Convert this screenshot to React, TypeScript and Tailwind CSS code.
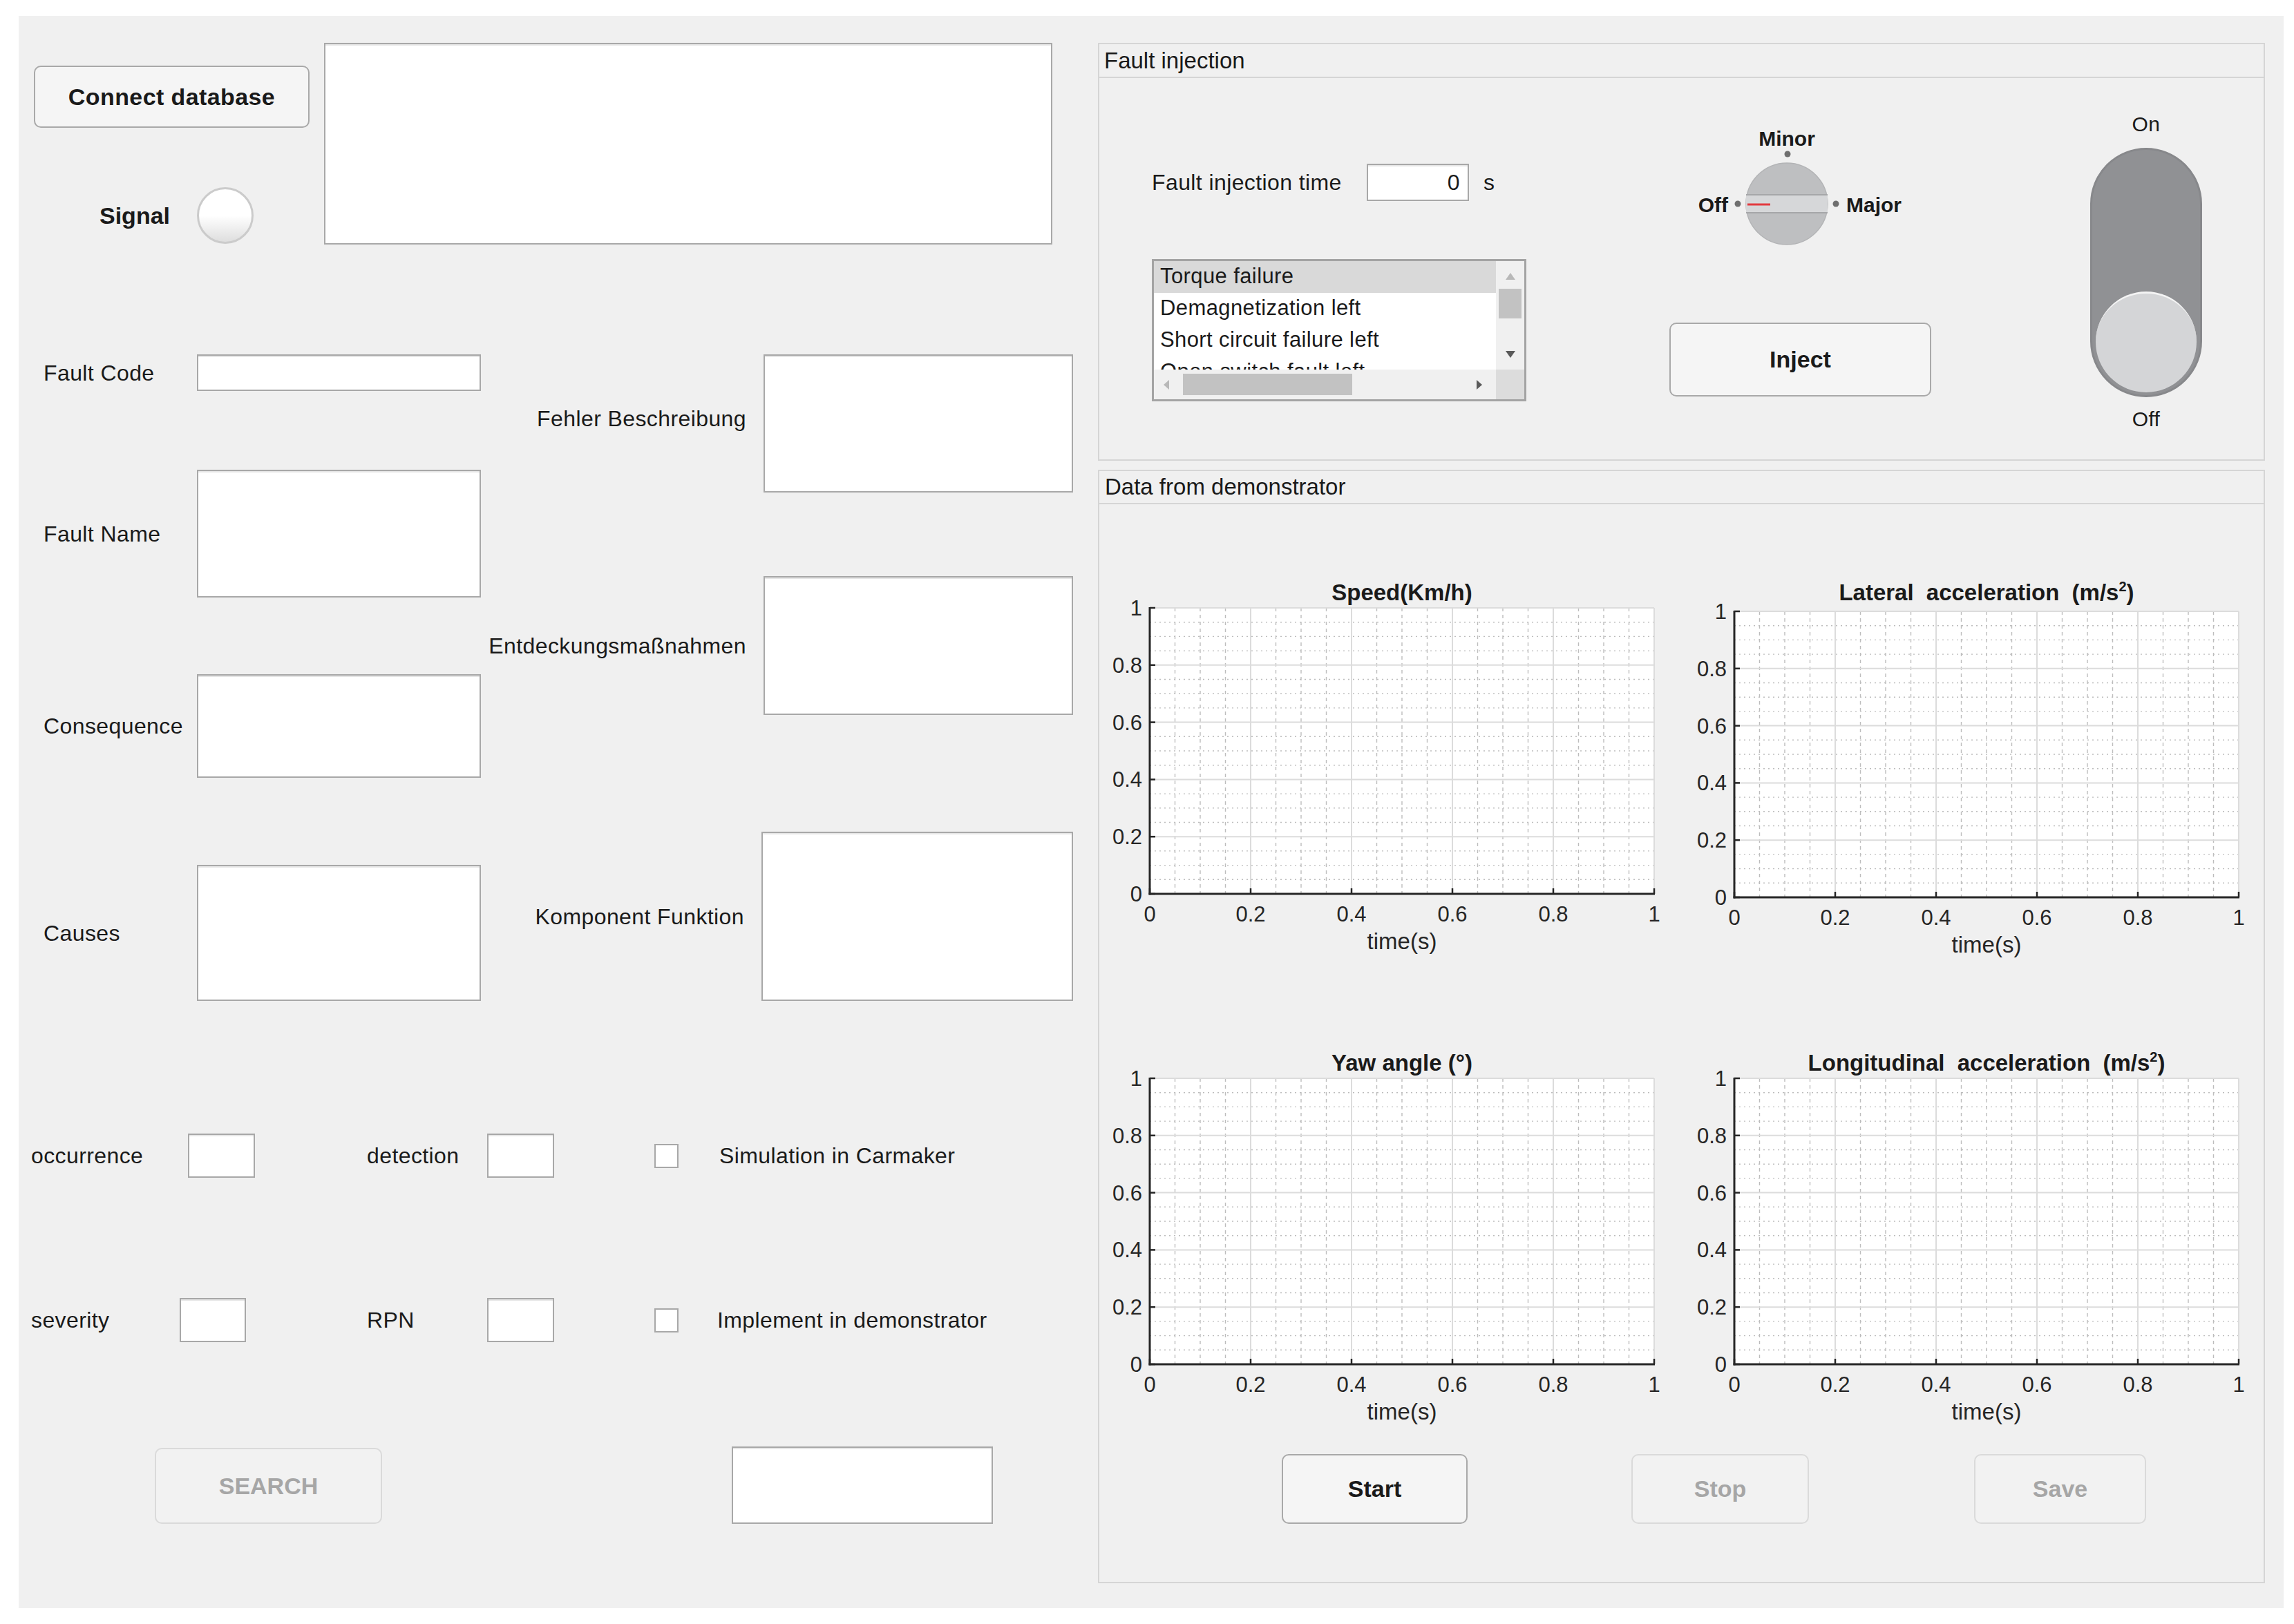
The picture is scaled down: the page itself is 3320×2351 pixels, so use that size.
const FIELD = "bg-white border-2 border-[#a8a8a8] shadow-[inset_0_2px_0_#e6e6e6] shrink-0";
const BTN = "rounded-[10px] border-2 border-[#a9a9a9] bg-[#f5f5f5] font-bold text-[34px] text-[#1a1a1a]";
const BTN_OFF = "rounded-[10px] border-2 border-[#dadada] bg-[#f2f2f2] font-bold text-[34px] text-[#a6a6a6]";

function Tri({ dir, color, className = "" }: { dir: "up" | "down" | "left" | "right"; color: string; className?: string }) {
  const vertical = dir === "up" || dir === "down";
  const w = vertical ? 14 : 8;
  const h = vertical ? 10 : 14;
  const pts =
    dir === "up" ? "7,0 14,10 0,10" : dir === "down" ? "0,0 14,0 7,10" : dir === "left" ? "8,0 8,14 0,7" : "0,0 8,7 0,14";
  return (
    <svg width={w} height={h} className={"block shrink-0 " + className}>
      <polygon points={pts} fill={color} />
    </svg>
  );
}

const TICKS = ["0", "0.2", "0.4", "0.6", "0.8", "1"];

function Chart({ title, sup = false, spaced = false, dy = 0 }: { title: string; sup?: boolean; spaced?: boolean; dy?: number }) {
  const X0 = 60;
  const Y0 = 60 + dy;
  const W = 730;
  const H = 414;
  const minor = Array.from({ length: 21 }, (_, i) => i).filter((i) => i % 4 !== 0);
  const major = [0, 1, 2, 3, 4, 5];
  return (
    <svg width={800} height={570} className="block" fontFamily="'Liberation Sans', Arial, sans-serif">
      <rect x={X0} y={Y0} width={W} height={H} fill="#ffffff" />
      {minor.map((i) => (
        <line key={"mv" + i} x1={X0 + (W * i) / 20} x2={X0 + (W * i) / 20} y1={Y0} y2={Y0 + H} stroke="#bdbdbd" strokeWidth={1.4} strokeDasharray="5 5" />
      ))}
      {minor.map((i) => (
        <line key={"mh" + i} x1={X0} x2={X0 + W} y1={Y0 + (H * i) / 20} y2={Y0 + (H * i) / 20} stroke="#bdbdbd" strokeWidth={1.4} strokeDasharray="2 5" />
      ))}
      {major.map((i) => (
        <line key={"gv" + i} x1={X0 + (W * i) / 5} x2={X0 + (W * i) / 5} y1={Y0} y2={Y0 + H} stroke="#dcdcdc" strokeWidth={2} />
      ))}
      {major.map((i) => (
        <line key={"gh" + i} x1={X0} x2={X0 + W} y1={Y0 + (H * i) / 5} y2={Y0 + (H * i) / 5} stroke="#dcdcdc" strokeWidth={2} />
      ))}
      <line x1={X0} x2={X0} y1={Y0 - 1} y2={Y0 + H + 1.5} stroke="#262626" strokeWidth={3} />
      <line x1={X0 - 1.5} x2={X0 + W + 1} y1={Y0 + H} y2={Y0 + H} stroke="#262626" strokeWidth={3} />
      {major.map((i) => (
        <line key={"tx" + i} x1={X0 + (W * i) / 5} x2={X0 + (W * i) / 5} y1={Y0 + H} y2={Y0 + H - 8} stroke="#262626" strokeWidth={2.5} />
      ))}
      {major.map((i) => (
        <line key={"ty" + i} x1={X0} x2={X0 + 8} y1={Y0 + H - (H * i) / 5} y2={Y0 + H - (H * i) / 5} stroke="#262626" strokeWidth={2.5} />
      ))}
      {TICKS.map((t, i) => (
        <text key={"ly" + t} x={X0 - 11} y={Y0 + H - (H * i) / 5 + 11} textAnchor="end" fontSize={31} fill="#262626">
          {t}
        </text>
      ))}
      {TICKS.map((t, i) => (
        <text key={"lx" + t} x={X0 + (W * i) / 5} y={Y0 + H + 40} textAnchor="middle" fontSize={31} fill="#262626">
          {t}
        </text>
      ))}
      <text x={X0 + W / 2} y={Y0 + H + 80} textAnchor="middle" fontSize={33} fill="#262626">
        time(s)
      </text>
      <text x={X0 + W / 2} y={60 - 11} textAnchor="middle" fontSize={33} fontWeight="bold" fill="#1a1a1a" wordSpacing={spaced ? 9 : 0}>
        {title}
        {sup && (
          <>
            <tspan dy={-13} fontSize={20}>
              2
            </tspan>
            <tspan dy={13}>)</tspan>
          </>
        )}
      </text>
    </svg>
  );
}

function Knob() {
  return (
    <svg width={379} height={190} className="block" fontFamily="'Liberation Sans', Arial, sans-serif">
      <text x={170} y={36} textAnchor="middle" fontSize={30} fontWeight="bold" fill="#1a1a1a">
        Minor
      </text>
      <circle cx={171} cy={48} r={4.5} fill="#6f6f6f" />
      <circle cx={99} cy={120} r={4.5} fill="#6f6f6f" />
      <circle cx={241} cy={120} r={4.5} fill="#6f6f6f" />
      <text x={85} y={132} textAnchor="end" fontSize={30} fontWeight="bold" fill="#1a1a1a">
        Off
      </text>
      <text x={256} y={132} fontSize={30} fontWeight="bold" fill="#1a1a1a">
        Major
      </text>
      <circle cx={170} cy={120} r={59} fill="#bebfc1" stroke="#b3b4b6" strokeWidth={1.5} />
      <rect x={111} y={107} width={118} height={26} fill="#d6d7d9" />
      <line x1={111} x2={229} y1={107} y2={107} stroke="#a6a7a9" strokeWidth={2} />
      <line x1={111} x2={229} y1={133} y2={133} stroke="#a6a7a9" strokeWidth={2} />
      <line x1={113} x2={146} y1={121} y2={121} stroke="#e23a3f" strokeWidth={3} />
    </svg>
  );
}

function LeftSide() {
  return (
    <div className="w-[1562px] shrink-0 flex flex-col text-[32px] tracking-[0.4px]">
      <div className="mt-[39px] h-[292px] flex">
        <div className="ml-[22px] w-[399px] flex flex-col">
          <button className={"mt-[33px] h-[90px] w-[399px] " + BTN}>Connect database</button>
          <div className="mt-[86px] h-[82px] flex items-center">
            <span className="ml-[95px] w-[141px] text-[34px] font-bold tracking-normal">Signal</span>
            <div className="w-[82px] h-[82px] rounded-full border-[3px] border-[#cbcbcb] bg-linear-to-b from-white via-white to-[#dedede]" />
          </div>
        </div>
        <div className={"ml-[21px] w-[1054px] h-[292px] " + FIELD} />
      </div>

      <div className="mt-[159px] flex">
        <div className="ml-[36px] w-[633px] flex flex-col">
          <div className="h-[53px] flex items-center">
            <span className="w-[222px]">Fault Code</span>
            <div className={"w-[411px] h-full " + FIELD} />
          </div>
          <div className="mt-[114px] h-[185px] flex items-center">
            <span className="w-[222px]">Fault Name</span>
            <div className={"w-[411px] h-full " + FIELD} />
          </div>
          <div className="mt-[111px] h-[150px] flex items-center">
            <span className="w-[222px]">Consequence</span>
            <div className={"w-[411px] h-full " + FIELD} />
          </div>
          <div className="mt-[126px] h-[197px] flex items-center">
            <span className="w-[222px]">Causes</span>
            <div className={"w-[411px] h-full " + FIELD} />
          </div>
        </div>
        <div className="ml-[4px] w-[853px] flex flex-col">
          <div className="h-[200px] flex items-center justify-end">
            <span className="mb-[14px] whitespace-nowrap">Fehler Beschreibung</span>
            <div className={"ml-[25px] w-[448px] h-full " + FIELD} />
          </div>
          <div className="mt-[121px] h-[201px] flex items-center justify-end">
            <span className="whitespace-nowrap">Entdeckungsmaßnahmen</span>
            <div className={"ml-[25px] w-[448px] h-full " + FIELD} />
          </div>
          <div className="mt-[169px] h-[245px] flex items-center justify-end">
            <span className="whitespace-nowrap">Komponent Funktion</span>
            <div className={"ml-[25px] w-[451px] h-full " + FIELD} />
          </div>
        </div>
      </div>

      <div className="mt-[192px] h-[64px] flex items-center pl-[18px]">
        <span className="w-[227px]">occurrence</span>
        <div className={"w-[97px] h-full " + FIELD} />
        <span className="ml-[162px] w-[174px]">detection</span>
        <div className={"w-[97px] h-full " + FIELD} />
        <div className="ml-[145px] w-[35px] h-[35px] bg-white border-2 border-[#a8a8a8]" />
        <span className="ml-[59px]">Simulation in Carmaker</span>
      </div>
      <div className="mt-[174px] h-[64px] flex items-center pl-[18px]">
        <span className="w-[215px]">severity</span>
        <div className={"w-[96px] h-full " + FIELD} />
        <span className="ml-[175px] w-[174px]">RPN</span>
        <div className={"w-[97px] h-full " + FIELD} />
        <div className="ml-[145px] w-[35px] h-[35px] bg-white border-2 border-[#a8a8a8]" />
        <span className="ml-[56px]">Implement in demonstrator</span>
      </div>

      <div className="mt-[151px] h-[112px] flex items-end">
        <button className={"ml-[197px] w-[329px] h-[110px] tracking-normal " + BTN_OFF}>SEARCH</button>
        <div className={"ml-[506px] w-[378px] h-[112px] " + FIELD} />
      </div>
    </div>
  );
}

function FaultInjection() {
  const items = ["Torque failure", "Demagnetization left", "Short circuit failure left", "Open switch fault left"];
  return (
    <div className="mt-[39px] h-[605px] border-2 border-[#d5d5d5] flex flex-col">
      <div className="h-[49px] shrink-0 border-b-2 border-[#d5d5d5] pl-[7px] flex items-center text-[33px]">Fault injection</div>
      <div className="flex flex-1 text-[32px] tracking-[0.4px]">
        <div className="ml-[76px] w-[542px] flex flex-col">
          <div className="mt-[124px] h-[54px] flex items-center">
            <span className="w-[311px]">Fault injection time</span>
            <div className={"w-[148px] h-full flex items-center justify-end pr-[11px] " + FIELD}>0</div>
            <span className="ml-[21px]">s</span>
          </div>
          <div className="mt-[84px] w-[542px] h-[206px] border-[3px] border-[#a3a3a3] bg-white flex flex-col">
            <div className="h-[157px] flex">
              <div className="flex-1 overflow-hidden text-[31px]">
                {items.map((t, i) => (
                  <div key={t} className={"h-[46px] leading-[44px] pl-[9px] whitespace-nowrap " + (i === 0 ? "bg-[#d9d9d9]" : "")}>
                    {t}
                  </div>
                ))}
              </div>
              <div className="w-[41px] bg-[#f0f0f0] flex flex-col items-center">
                <Tri dir="up" color="#b8b8b8" className="mt-[17px]" />
                <div className="mt-[13px] w-[33px] h-[43px] bg-[#c2c2c2]" />
                <Tri dir="down" color="#5a5a5a" className="mt-[47px]" />
              </div>
            </div>
            <div className="h-[43px] flex">
              <div className="flex-1 bg-[#f0f0f0] flex items-center">
                <Tri dir="left" color="#b8b8b8" className="ml-[14px]" />
                <div className="ml-[20px] w-[245px] h-[31px] bg-[#c2c2c2]" />
                <Tri dir="right" color="#5a5a5a" className="ml-[180px]" />
              </div>
              <div className="w-[41px] bg-[#dcdcdc]" />
            </div>
          </div>
        </div>

        <div className="ml-[207px] w-[379px] mt-[62px] flex flex-col tracking-normal">
          <Knob />
          <button className={"mt-[102px] h-[107px] w-[379px] " + BTN}>Inject</button>
        </div>

        <div className="ml-[230px] w-[162px] mt-[49px] flex flex-col items-center text-[30px]">
          <span className="h-[36px] leading-[36px]">On</span>
          <div className="mt-[16px] w-[162px] h-[361px] rounded-full bg-[#909194] border-[3px] border-[#87888b] flex flex-col justify-end items-center pb-[4px]">
            <div className="w-[146px] h-[146px] rounded-full bg-[#d4d5d7] border-t-[3px] border-t-[#f4f4f4]" />
          </div>
          <span className="mt-[14px] h-[36px] leading-[36px]">Off</span>
        </div>
      </div>
    </div>
  );
}

function DataPanel() {
  return (
    <div className="mt-[13px] h-[1612px] border-2 border-[#d5d5d5] flex flex-col">
      <div className="h-[48px] shrink-0 border-b-2 border-[#d5d5d5] pl-[8px] flex items-center text-[33px]">Data from demonstrator</div>
      <div className="mt-[90px] ml-[13px] grid grid-cols-[800px_800px] gap-x-[46px] gap-y-[111px]">
        <Chart title="Speed(Km/h)" />
        <Chart title="Lateral acceleration (m/s" sup spaced dy={5} />
        <Chart title="Yaw angle (°)" />
        <Chart title="Longitudinal acceleration (m/s" sup spaced />
      </div>
      <div className="mt-[34px] flex">
        <button className={"ml-[264px] w-[269px] h-[101px] " + BTN + " border-[#8e8e8e]"}>Start</button>
        <button className={"ml-[237px] w-[257px] h-[101px] " + BTN_OFF}>Stop</button>
        <button className={"ml-[239px] w-[249px] h-[101px] " + BTN_OFF}>Save</button>
      </div>
    </div>
  );
}

export default function App() {
  return (
    <div className="w-[3320px] h-[2351px] bg-white pt-[23px] pl-[27px] font-['Liberation_Sans',Arial,sans-serif] text-[#1a1a1a]">
      <div className="w-[3278px] h-[2305px] bg-[#f0f0f0] flex">
        <LeftSide />
        <div className="w-[1689px] shrink-0 flex flex-col">
          <FaultInjection />
          <DataPanel />
        </div>
      </div>
    </div>
  );
}
